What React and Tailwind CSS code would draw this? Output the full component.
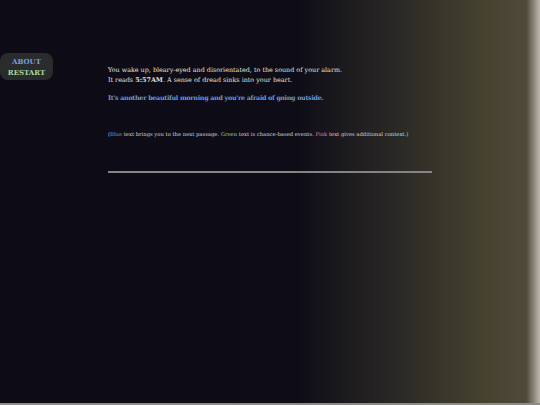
export default function App() {
  const serif = { fontFamily: '"DejaVu Serif", "Liberation Serif", serif' };
  return (
    <div className="w-[540px] h-[405px] overflow-hidden flex flex-col" style={serif}>
      <div className="flex-1 flex bg-[linear-gradient(to_right,#0d0c16_0%,#0e0d17_55%,#2a2825_73%,#45412f_89%,#4f4a3b_97.5%,#bdb9ae_100%)]">
        <div className="w-[108px] shrink-0 pt-[53px]">
          <div className="w-[53px] h-[27px] rounded-[8px] bg-[#2a2b2d] flex flex-col items-center justify-center gap-[1px] font-bold text-[7px] leading-[10px] uppercase pt-[1px]">
            <span className="text-[#7c9fd8]">About</span>
            <span className="text-[#a6d69f]">Restart</span>
          </div>
        </div>
        <div className="w-[324px] pt-[65px] text-[6.4px] leading-[10px] text-[#e4e2dc]">
          <p>You wake up, bleary-eyed and disorientated, to the sound of your alarm.</p>
          <p>It reads <b>5:57AM</b>. A sense of dread sinks into your heart.</p>
          <p className="mt-[8px] font-bold text-[#6f9ad6] tracking-[-0.3px]">It's another beautiful morning and you're afraid of going outside.</p>
          <p className="mt-[27px] text-[5.25px] leading-[8px] text-[#d8d6d0]">
            (<span className="text-[#6f9ad6]">Blue</span> text brings you to the next passage. <span className="text-[#8fcf88]">Green</span> text is chance-based events. <span className="text-[#d27fc0]">Pink</span> text gives additional context.)
          </p>
          <div className="mt-[33px] h-[2px] bg-[#858383]" />
        </div>
      </div>
      <div className="h-[2px] bg-[#8d8b86]" />
    </div>
  );
}
